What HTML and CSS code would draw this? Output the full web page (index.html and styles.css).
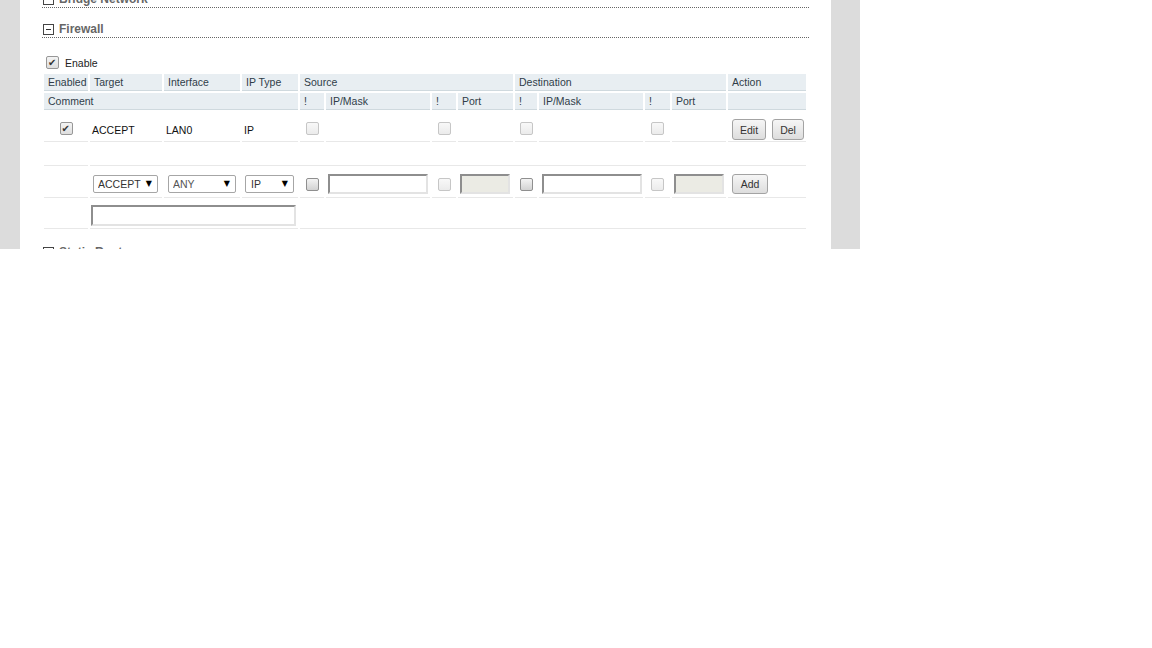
FILE: index.html
```html
<!DOCTYPE html>
<html lang="en">
<head>
  <meta charset="UTF-8">
  <meta name="viewport" content="width=device-width, initial-scale=1.0">
  <title>Firewall</title>
  <link rel="stylesheet" href="styles.css">
</head>
<body>
  <div class="screen">
    <div class="panel">
      <div class="section first">
        <h3 class="fold"><svg class="fold-icon" width="11" height="11" viewBox="0 0 11 11"><rect x="0.5" y="0.5" width="10" height="10" fill="#fff" stroke="#444"/><path d="M3 5.5h5" stroke="#333"/></svg>Bridge Network</h3>
      </div>

      <div class="section">
        <h3 class="fold"><svg class="fold-icon" width="11" height="11" viewBox="0 0 11 11"><rect x="0.5" y="0.5" width="10" height="10" fill="#fff" stroke="#444"/><path d="M3 5.5h5" stroke="#333"/></svg>Firewall</h3>

        <label class="enable"><input type="checkbox" class="cb" checked>Enable</label>

        <table class="rules">
          <colgroup>
            <col style="width:44px"><col style="width:72px"><col style="width:76px"><col style="width:56px">
            <col style="width:24px"><col style="width:104px"><col style="width:24px"><col style="width:55px">
            <col style="width:22px"><col style="width:104px"><col style="width:25px"><col style="width:54px">
            <col style="width:78px">
          </colgroup>
          <thead>
            <tr>
              <th>Enabled</th>
              <th>Target</th>
              <th>Interface</th>
              <th>IP Type</th>
              <th colspan="4">Source</th>
              <th colspan="4">Destination</th>
              <th>Action</th>
            </tr>
            <tr>
              <th colspan="4">Comment</th>
              <th>!</th>
              <th>IP/Mask</th>
              <th>!</th>
              <th>Port</th>
              <th>!</th>
              <th>IP/Mask</th>
              <th>!</th>
              <th>Port</th>
              <th></th>
            </tr>
          </thead>
          <tbody>
            <tr class="rule">
              <td class="c"><input type="checkbox" class="cb" checked></td>
              <td>ACCEPT</td>
              <td>LAN0</td>
              <td>IP</td>
              <td class="c"><input type="checkbox" class="cb" disabled></td>
              <td></td>
              <td class="c"><input type="checkbox" class="cb" disabled></td>
              <td></td>
              <td class="c"><input type="checkbox" class="cb" disabled></td>
              <td></td>
              <td class="c"><input type="checkbox" class="cb" disabled></td>
              <td></td>
              <td><div class="actions"><button class="btn edit">Edit</button><button class="btn del">Del</button></div></td>
            </tr>
            <tr class="note">
              <td>&nbsp;</td>
              <td colspan="12">&nbsp;</td>
            </tr>
            <tr class="new">
              <td></td>
              <td><span class="pick target"><select><option>ACCEPT</option><option>DROP</option><option>REJECT</option></select></span></td>
              <td><span class="pick iface"><select class="dim"><option>ANY</option><option>LAN0</option><option>WAN0</option></select></span></td>
              <td><span class="pick iptype"><select><option>IP</option><option>TCP</option><option>UDP</option></select></span></td>
              <td class="c"><input type="checkbox" class="cb"></td>
              <td><input type="text" class="text addr"></td>
              <td class="c"><input type="checkbox" class="cb" disabled></td>
              <td><input type="text" class="text port" disabled></td>
              <td class="c"><input type="checkbox" class="cb"></td>
              <td><input type="text" class="text addr dest"></td>
              <td class="c"><input type="checkbox" class="cb" disabled></td>
              <td><input type="text" class="text port" disabled></td>
              <td><div class="actions"><button class="btn add">Add</button></div></td>
            </tr>
            <tr class="new-note">
              <td></td>
              <td colspan="3"><input type="text" class="text comment"></td>
              <td colspan="9"></td>
            </tr>
          </tbody>
        </table>
      </div>

      <div class="section">
        <h3 class="fold"><svg class="fold-icon" width="11" height="11" viewBox="0 0 11 11"><rect x="0.5" y="0.5" width="10" height="10" fill="#fff" stroke="#444"/><path d="M3 5.5h5" stroke="#333"/></svg>Static Routes</h3>
      </div>
    </div>
  </div>
</body>
</html>
```

FILE: styles.css
```css
body {
  margin: 0;
  background: #fff;
  font-family: 'Liberation Sans', Arial, sans-serif;
  font-size: 10.5px;
  color: #111;
}
.screen {
  width: 860px;
  height: 249px;
  overflow: hidden;
  background: #dcdcdc;
  padding: 0 29px 0 20px;
  box-sizing: border-box;
}
.panel {
  background: #fff;
  padding: 0 22px;
  min-height: 100%;
}
.section {
  margin-bottom: 13px;
}
.section.first {
  margin-top: -9px;
}
.fold {
  display: flex;
  align-items: center;
  margin: 0;
  height: 16px;
  line-height: 16px;
  font-size: 12px;
  font-weight: bold;
  color: #666;
  border-bottom: 1px dotted #666;
}
.fold-icon {
  margin: 0 5px 0 1px;
  flex: none;
}
.enable {
  display: flex;
  align-items: center;
  height: 13px;
  margin-top: 18px;
  color: #222;
}
.enable .cb {
  margin: 0 6px 0 4px;
}
.rules {
  border-collapse: separate;
  border-spacing: 2px;
  table-layout: fixed;
  width: 766px;
  margin-top: 3px;
}
.rules th {
  background: #e8eef2;
  color: #2f3d49;
  font-weight: normal;
  text-align: left;
  padding: 1px 4px;
  line-height: 14px;
  border-bottom: 1px solid #cfd9de;
  white-space: nowrap;
  overflow: hidden;
}
.rules td {
  padding: 7px 2px 1px;
  line-height: 14px;
  vertical-align: middle;
  border-bottom: 1px solid #e8e8e8;
  white-space: nowrap;
}
.rules td.c .cb {
  display: block;
  margin: 0 auto;
}
.rules .rule td.c .cb {
  position: relative;
  top: -1px;
}
.rules .note td {
  padding: 6px 2px 1px;
}
.rules .new td {
  padding: 6px 2px 3px;
}
.rules .new-note td {
  padding: 5px 2px 2px;
}
.cb {
  appearance: none;
  -webkit-appearance: none;
  position: relative;
  width: 13px;
  height: 13px;
  margin: 0;
  box-sizing: border-box;
  border: 1px solid #8f8f8f;
  border-radius: 2px;
  background: linear-gradient(#f3f3f3, #d2d2d2);
}
.cb:checked {
  border-color: #979797;
  background: linear-gradient(#f4f4f4, #dedede);
}
.cb:checked::after {
  content: "\2714";
  position: absolute;
  left: 1px;
  top: 0;
  font-family: 'DejaVu Sans', sans-serif;
  font-size: 10px;
  line-height: 11px;
  color: #333;
}
.cb:disabled {
  border-color: #c6c6c6;
  background: linear-gradient(#f8f8f8, #ebebeb);
}
.pick {
  position: relative;
  display: block;
}
.pick::after {
  content: "\25BC";
  position: absolute;
  right: 6px;
  top: 4px;
  font-family: 'DejaVu Sans', sans-serif;
  font-size: 8px;
  line-height: 10px;
  color: #000;
  pointer-events: none;
}
.pick select {
  appearance: none;
  -webkit-appearance: none;
  display: block;
  width: 100%;
  height: 18px;
  margin: 0;
  padding: 0 0 0 4px;
  border: 1px solid #a6a6a6;
  border-radius: 2px;
  background: #fff;
  font-family: inherit;
  font-size: 10.5px;
  color: #333;
}
.pick select.dim {
  color: #555;
}
.pick.target {
  width: 65px;
  margin-left: 1px;
}
.pick.iface {
  width: 68px;
  margin-left: 2px;
}
.pick.iptype {
  width: 49px;
  margin-left: 1px;
}
.pick.iptype select {
  padding-left: 5px;
}
.text {
  display: block;
  box-sizing: border-box;
  height: 20px;
  margin: 0;
  padding: 0 2px;
  border: 2px solid;
  border-color: #8e8e8e #e3e3e3 #e3e3e3 #8e8e8e;
  background: #fff;
  font-family: inherit;
  font-size: 10.5px;
}
.text.addr {
  width: 100px;
}
.text.dest {
  margin-left: 1px;
}
.text.port {
  width: 50px;
}
.text:disabled {
  background: #ebebe4;
}
.text.comment {
  width: 205px;
  height: 21px;
  margin-left: -1px;
}
.actions {
  display: flex;
  gap: 6px;
  padding-left: 2px;
}
.btn {
  box-sizing: border-box;
  height: 21px;
  margin: 0;
  padding: 0;
  border: 1px solid #a3a3a3;
  border-radius: 3px;
  background: linear-gradient(#f6f6f6, #dddddd);
  font-family: inherit;
  font-size: 10.5px;
  color: #333;
}
.btn.edit {
  width: 34px;
}
.btn.del {
  width: 32px;
}
.btn.add {
  width: 36px;
  height: 20px;
}
```
